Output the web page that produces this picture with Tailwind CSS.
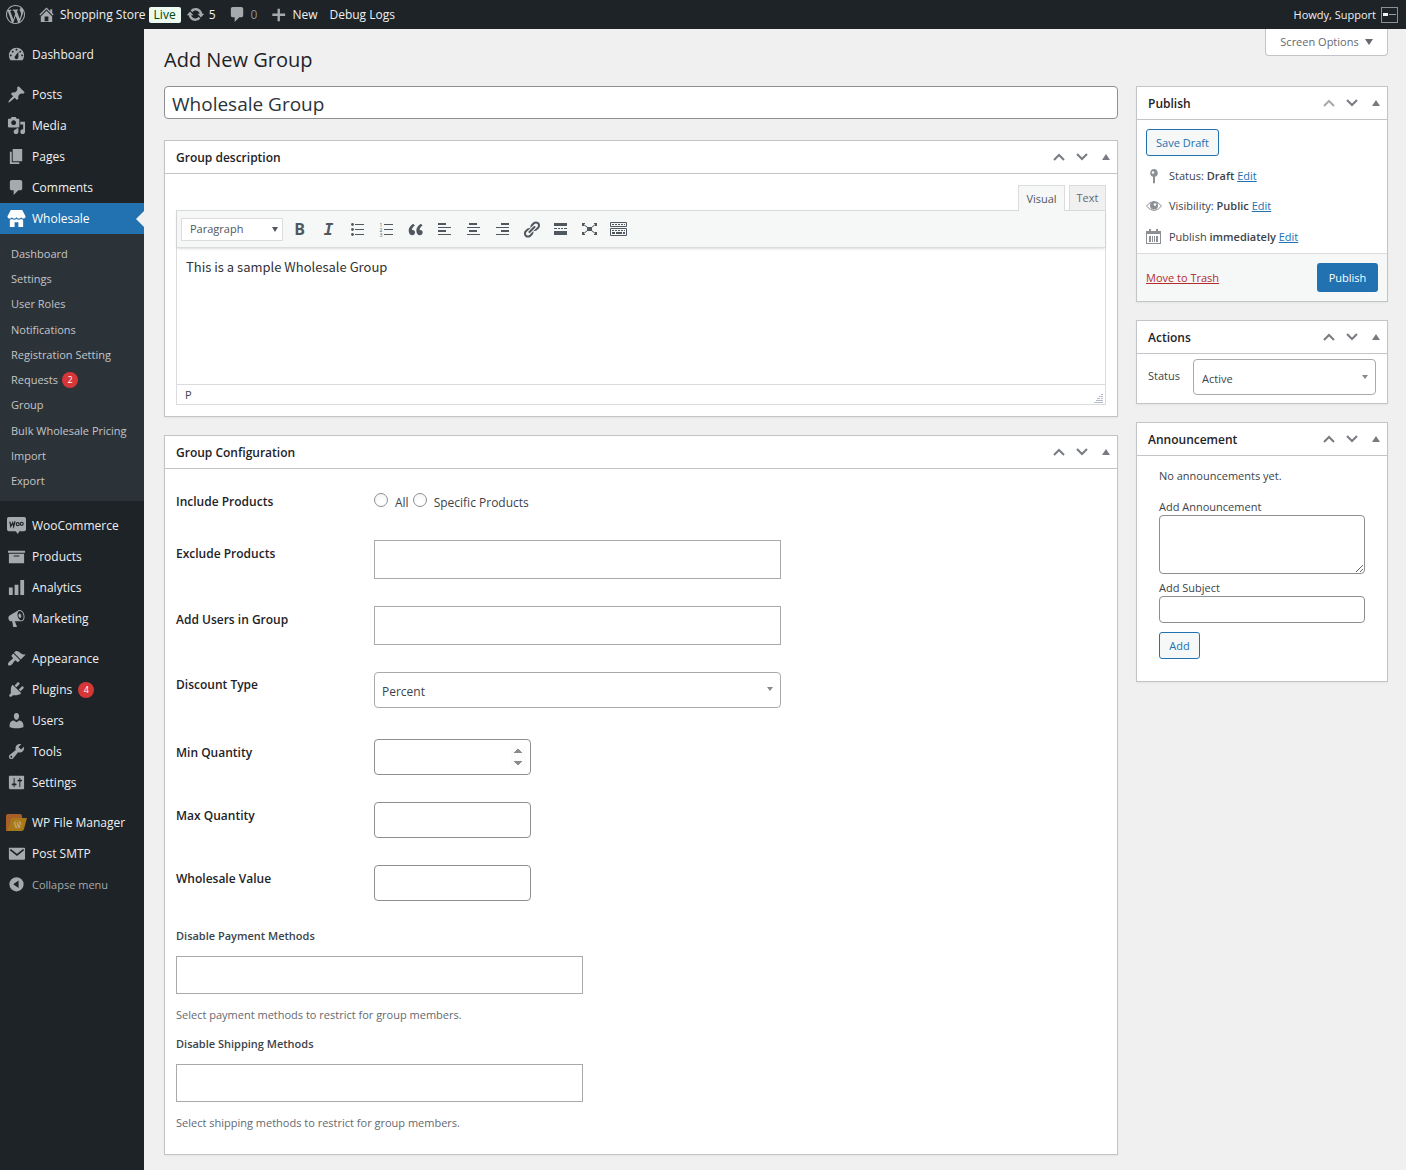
<!DOCTYPE html>
<html lang="en">
<head>
  <meta charset="UTF-8">
  <meta name="viewport" content="width=device-width, initial-scale=1.0">
  <title>Add New Group - Shopping Store</title>
  <script src="https://cdn.jsdelivr.net/npm/@tailwindcss/browser@4"></script>
  <style>
    body { font-family: 'Open Sans', 'Noto Sans', sans-serif; }
  </style>
</head>
<body class="bg-[#f0f0f1] text-[#3c434a] text-[11px] leading-[18px] min-h-screen flex flex-col">
  <!-- Shared icons -->
  <svg class="hidden" aria-hidden="true">
    <symbol id="i-up" viewBox="0 0 12 8"><path d="M1 7l5-5 5 5" fill="none" stroke="currentColor" stroke-width="2"/></symbol>
    <symbol id="i-down" viewBox="0 0 12 8"><path d="M1 1l5 5 5-5" fill="none" stroke="currentColor" stroke-width="2"/></symbol>
    <symbol id="i-toggle" viewBox="0 0 8 6"><path d="M4 0l4 6H0z" fill="currentColor"/></symbol>
    <symbol id="i-caret" viewBox="0 0 8 6"><path d="M0 0h8L4 6z" fill="currentColor"/></symbol>
    <symbol id="i-comment" viewBox="0 0 20 20"><path d="M5 2h9c1.1 0 2 .9 2 2v7c0 1.1-.9 2-2 2h-2l-5 5v-5H5c-1.1 0-2-.9-2-2V4c0-1.1.9-2 2-2z"/></symbol>
    <symbol id="i-wp" viewBox="0 0 20 20"><path d="M20 10c0-5.51-4.49-10-10-10C4.48 0 0 4.49 0 10c0 5.52 4.48 10 10 10 5.51 0 10-4.48 10-10zM7.78 15.37L4.37 6.22c.55-.02 1.17-.08 1.17-.08.5-.06.44-1.13-.06-1.11 0 0-1.45.11-2.37.11-.18 0-.37 0-.58-.01C4.12 2.69 6.87 1.11 10 1.11c2.33 0 4.45.87 6.05 2.34-.68-.11-1.65.39-1.65 1.58 0 .74.45 1.36.9 2.1.35.61.55 1.36.55 2.46 0 1.49-1.4 5-1.4 5l-3.03-8.37c.54-.02.82-.17.82-.17.5-.05.44-1.25-.06-1.22 0 0-1.44.12-2.38.12-.87 0-2.33-.12-2.33-.12-.5-.03-.56 1.2-.06 1.22l.92.08 1.26 3.41zM17.41 10c.24-.64.74-1.87.43-4.25.7 1.29 1.05 2.71 1.05 4.25 0 3.29-1.73 6.24-4.4 7.78.97-2.59 1.94-5.2 2.92-7.78zM6.1 18.09C3.12 16.65 1.11 13.53 1.11 10c0-1.3.23-2.48.72-3.59C3.25 10.3 4.67 14.2 6.1 18.09zm4.03-6.63l2.58 6.98c-.86.29-1.76.45-2.71.45-.79 0-1.57-.11-2.29-.33.81-2.38 1.62-4.74 2.42-7.1z"/></symbol>
  </svg>

  <!-- Admin bar -->
  <header class="h-[29px] bg-[#1d2327] text-[#f0f0f1] fill-[#a7aaad] text-[12px] flex items-center pl-[6px] pr-2">
    <a href="#" aria-label="About WordPress"><svg class="size-[19px]"><use href="#i-wp"/></svg></a>
    <a href="#" class="flex items-center ml-3">
      <svg class="size-[19px] mr-1" viewBox="0 0 20 20"><path d="M16 8.5l1.53 1.53-1.06 1.06L10 4.6l-6.47 6.49-1.06-1.06L10 2.5l4 4v-2h2v4zm-6-2.46l6 5.99V18H4v-5.97zM12 17v-5H8v5h4z"/></svg>
      Shopping Store
    </a>
    <span class="ml-[3px] h-4 px-[5px] rounded-[2px] bg-[#edfaef] text-[#00450c] text-[12px] leading-[15px]">Live</span>
    <a href="#" class="flex items-center ml-[5px]">
      <svg class="size-[19px] mr-1" viewBox="0 0 20 20"><path d="M10.2 3.28c3.53 0 6.43 2.61 6.92 6h2.08l-3.5 4-3.5-4h2.32c-.45-1.97-2.21-3.45-4.32-3.45-1.45 0-2.73.71-3.54 1.78L4.95 5.66C6.23 4.2 8.11 3.28 10.2 3.28zm-.4 13.44c-3.52 0-6.43-2.61-6.92-6H.8l3.5-4c1.17 1.33 2.33 2.67 3.5 4H5.48c.45 1.97 2.21 3.45 4.32 3.45 1.45 0 2.73-.71 3.54-1.78l1.71 1.95c-1.28 1.46-3.15 2.38-5.25 2.38z"/></svg>
      5
    </a>
    <a href="#" class="flex items-center ml-3 text-[#8c8f94]"><svg class="size-[19px] mr-1"><use href="#i-comment"/></svg>0</a>
    <a href="#" class="flex items-center ml-3">
      <svg class="size-[19px] mr-1" viewBox="0 0 20 20"><path d="M17 9v2.500h-5.500V17H9v-5.500H3.500V9H9V4h2.500v5z"/></svg>
      New
    </a>
    <a href="#" class="ml-3">Debug Logs</a>
    <a href="#" class="flex items-center ml-auto text-[11px]">
      Howdy, Support
      <span class="ml-[5px] w-[17px] h-4 border border-[#8c8f94] flex items-center gap-px pl-px"><i class="w-[5px] h-[3px] bg-gray-100"></i><i class="w-[7px] h-px bg-gray-400"></i></span>
    </a>
  </header>

  <div class="flex flex-1">
    <!-- Admin menu -->
    <nav class="w-36 shrink-0 bg-[#1d2327] text-[#f0f0f1] fill-[#a7aaad] text-[12px] pt-[10px]">
      <ul>
        <li><a href="#" class="flex items-center h-[31px] pl-[7px] gap-[6px]">
          <svg class="size-[19px]" viewBox="0 0 20 20"><path d="M3.76 17h12.48c1.1-1.37 1.76-3.11 1.76-5 0-4.42-3.58-8-8-8s-8 3.58-8 8c0 1.89.66 3.63 1.76 5zM10 5c.55 0 1 .45 1 1s-.45 1-1 1-1-.45-1-1 .45-1 1-1zM6 7c.55 0 1 .45 1 1s-.45 1-1 1-1-.45-1-1 .45-1 1-1zm8 0c.55 0 1 .45 1 1s-.45 1-1 1-1-.45-1-1 .45-1 1-1zm-5.37 5.55L12 8v6c0 1.1-.9 2-2 2s-2-.9-2-2c0-.57.24-1.08.63-1.45zM4 11c.55 0 1 .45 1 1s-.45 1-1 1-1-.45-1-1 .45-1 1-1zm12 0c.55 0 1 .45 1 1s-.45 1-1 1-1-.45-1-1 .45-1 1-1z" transform="translate(0 -1)"/></svg>
          Dashboard</a></li>
      </ul>
      <ul class="mt-[9px]">
        <li><a href="#" class="flex items-center h-[31px] pl-[7px] gap-[6px]">
          <svg class="size-[19px]" viewBox="0 0 20 20"><path d="M10.44 3.02l1.82-1.82 6.36 6.35-1.83 1.82c-1.05-.68-2.48-.57-3.41.36l-.75.75c-.92.93-1.04 2.35-.35 3.41l-1.83 1.82-2.41-2.41-2.8 2.79c-.42.42-3.38 2.71-3.8 2.29s1.86-3.39 2.28-3.81l2.79-2.79L4.1 9.36l1.83-1.82c1.05.69 2.48.57 3.4-.36l.75-.75c.93-.92 1.05-2.35.36-3.41z"/></svg>
          Posts</a></li>
        <li><a href="#" class="flex items-center h-[31px] pl-[7px] gap-[6px]">
          <svg class="size-[19px]" viewBox="0 0 20 20"><path d="M13 11V4c0-.55-.45-1-1-1h-1.67L9 1H5L3.67 3H2c-.55 0-1 .45-1 1v7c0 .55.45 1 1 1h10c.55 0 1-.45 1-1zM7 4.5c1.38 0 2.5 1.12 2.5 2.5S8.38 9.5 7 9.5 4.5 8.38 4.5 7 5.62 4.5 7 4.5zM14 6h5v10.5c0 1.38-1.12 2.5-2.5 2.5S14 17.88 14 16.5s1.12-2.5 2.5-2.5c.17 0 .34.02.5.05V9h-3V6zm-4 8.05V13h2v3.5c0 1.38-1.12 2.5-2.5 2.5S7 17.88 7 16.5 8.12 14 9.5 14c.17 0 .34.02.5.05z"/></svg>
          Media</a></li>
        <li><a href="#" class="flex items-center h-[31px] pl-[7px] gap-[6px]">
          <svg class="size-[19px]" viewBox="0 0 20 20"><path d="M6 15V2h10v13H6zm-1 1h8v2H3V5h2v11z"/></svg>
          Pages</a></li>
        <li><a href="#" class="flex items-center h-[31px] pl-[7px] gap-[6px]">
          <svg class="size-[19px]"><use href="#i-comment"/></svg>
          Comments</a></li>
        <li>
          <a href="#" class="relative flex items-center h-[31px] pl-[7px] gap-[6px] bg-[#2271b1] text-white fill-white">
            <svg class="size-[19px]" viewBox="0 0 20 20"><path d="M4 1h12l3.500 6.500c0 1.500-1 2.500-2.300 2.500-1 0-1.800-.5-2.300-1.300-.5.800-1.400 1.300-2.400 1.300S10.600 9.500 10 8.700C9.400 9.500 8.500 10 7.500 10s-1.900-.5-2.400-1.300C4.600 9.500 3.800 10 2.800 10 1.500 10 .5 9 .5 7.500zM3 11.200c.8 0 1.500-.2 2.100-.6.700.4 1.500.6 2.400.6s1.800-.3 2.500-.7c.7.4 1.600.7 2.500.7s1.700-.2 2.400-.6c.6.400 1.300.6 2.100.6V19h-5v-5H8v5H3z"/></svg>
            Wholesale
            <span class="absolute right-0 top-2 border-y-8 border-r-8 border-y-transparent border-r-[#f0f0f1]"></span>
          </a>
          <ul class="flex flex-col h-[267px] py-[7px] bg-[#2c3338] text-[#c3c4c7] text-[11px]">
            <li class="flex-1 flex items-center pl-[11px]"><a href="#">Dashboard</a></li>
            <li class="flex-1 flex items-center pl-[11px]"><a href="#">Settings</a></li>
            <li class="flex-1 flex items-center pl-[11px]"><a href="#">User Roles</a></li>
            <li class="flex-1 flex items-center pl-[11px]"><a href="#">Notifications</a></li>
            <li class="flex-1 flex items-center pl-[11px]"><a href="#">Registration Setting</a></li>
            <li class="flex-1 flex items-center pl-[11px]"><a href="#" class="flex items-center gap-1">Requests <span class="size-4 rounded-full bg-[#d63638] text-white text-[9px] leading-4 text-center">2</span></a></li>
            <li class="flex-1 flex items-center pl-[11px]"><a href="#">Group</a></li>
            <li class="flex-1 flex items-center pl-[11px]"><a href="#">Bulk Wholesale Pricing</a></li>
            <li class="flex-1 flex items-center pl-[11px]"><a href="#">Import</a></li>
            <li class="flex-1 flex items-center pl-[11px]"><a href="#">Export</a></li>
          </ul>
        </li>
      </ul>
      <ul class="mt-[9px]">
        <li><a href="#" class="flex items-center h-[31px] pl-[7px] gap-[6px]">
          <svg class="size-[19px]" viewBox="0 0 20 20"><path d="M2 1h16a2 2 0 0 1 2 2v11a2 2 0 0 1-2 2h-5l-1.500 3L9 16H2a2 2 0 0 1-2-2V3a2 2 0 0 1 2-2z"/><path d="M3 6l1 5 2-4 1 4 1.500-5.500" fill="none" stroke="#1d2327" stroke-width="1.300"/><circle cx="11.300" cy="8.600" r="1.600" fill="none" stroke="#1d2327" stroke-width="1.200"/><circle cx="15.500" cy="8.200" r="1.600" fill="none" stroke="#1d2327" stroke-width="1.200"/></svg>
          WooCommerce</a></li>
        <li><a href="#" class="flex items-center h-[31px] pl-[7px] gap-[6px]">
          <svg class="size-[19px]" viewBox="0 0 20 20"><path d="M19 4v2H1V4h18zM2 7h16v10H2V7zm11 3V9H7v1h6z"/></svg>
          Products</a></li>
        <li><a href="#" class="flex items-center h-[31px] pl-[7px] gap-[6px]">
          <svg class="size-[19px]" viewBox="0 0 20 20"><path d="M18 18V2h-4v16h4zm-6 0V7H8v11h4zm-6 0v-8H2v8h4z"/></svg>
          Analytics</a></li>
        <li><a href="#" class="flex items-center h-[31px] pl-[7px] gap-[6px]">
          <svg class="size-[19px]" viewBox="0 0 20 20"><path d="M18.150 5.940c.46 1.620.38 3.220-.02 4.480-.42 1.280-1.260 2.180-2.300 2.480-.16.06-.26.06-.4.06-.06.02-.12.02-.18.02-.06.02-.14.02-.22.02h-6.800l2.220 5.500c.02.14-.06.26-.14.34-.08.1-.24.16-.34.16H6.950c-.1 0-.26-.06-.34-.16-.08-.08-.16-.2-.14-.34l-1-5.500H4.250l-.02-.02c-.5.06-1.080-.18-1.540-.62s-.88-1.080-1.060-1.880c-.24-.8-.2-1.560-.02-2.200.18-.62.58-1.080 1.060-1.300l.02-.02 9-5.400c.1-.06.18-.1.24-.16.06-.04.14-.08.24-.12.16-.08.28-.12.5-.18 1.040-.3 2.240.1 3.220.98s1.840 2.240 2.260 3.860zm-2.580 5.980h-.02c.4-.1.74-.34 1.040-.7.58-.7.86-1.760.86-3.040 0-.64-.1-1.300-.28-1.980-.34-1.360-1.020-2.500-1.780-3.240s-1.680-1.100-2.460-.88c-.82.22-1.400.96-1.700 2-.32 1.040-.28 2.360.06 3.720.38 1.360 1 2.500 1.800 3.240.78.74 1.620 1.100 2.480.88zm-2.540-7.080c.22-.04.42-.02.62.04.38.16.76.48 1.020 1s.42 1.200.42 1.780c0 .3-.04.56-.12.8-.18.48-.44.84-.86.94-.34.1-.8-.06-1.140-.4s-.64-.86-.78-1.500c-.18-.62-.12-1.240.02-1.720s.48-.84.82-.94z"/></svg>
          Marketing</a></li>
      </ul>
      <ul class="mt-[9px]">
        <li><a href="#" class="flex items-center h-[31px] pl-[7px] gap-[6px]">
          <svg class="size-[19px]" viewBox="0 0 20 20"><path d="M14.480 11.060L7.410 3.990l1.500-1.500c.5-.56 2.300-.47 3.510.32 1.210.8 1.430 1.280 2.910 2.100 1.180.64 2.450 1.260 4.450.85zm-.71.71L6.700 4.700 4.930 6.470c-.39.39-.39 1.020 0 1.410l1.060 1.060c.39.39.39 1.030 0 1.420-.6.6-1.430 1.110-2.210 1.690-.35.26-.7.53-1.010.84C1.430 14.230.4 16.080 1.400 17.070c.99 1 2.840-.03 4.180-1.360.31-.31.58-.66.85-1.020.57-.78 1.080-1.610 1.690-2.210.39-.39 1.020-.39 1.410 0l1.060 1.060c.39.39 1.020.39 1.410 0z"/></svg>
          Appearance</a></li>
        <li><a href="#" class="flex items-center h-[31px] pl-[7px] gap-[6px]">
          <svg class="size-[19px]" viewBox="0 0 20 20"><path d="M13.110 4.360L9.870 7.600 8 5.730l3.240-3.240c.35-.34 1.050-.2 1.560.32.52.51.66 1.210.31 1.550zm-8 1.770l.91-1.120 9.010 9.010-1.190.84c-.71.71-2.630 1.160-3.820 1.160H6.140L4.900 17.260c-.59.59-1.540.59-2.120 0-.59-.58-.59-1.530 0-2.120l1.240-1.240v-3.880c0-1.130.4-3.190 1.090-3.890zm7.260 3.970l3.240-3.240c.34-.35 1.040-.21 1.550.31.52.51.66 1.210.31 1.550l-3.240 3.250z"/></svg>
          Plugins <span class="size-4 rounded-full bg-[#d63638] text-white text-[9px] leading-4 text-center">4</span></a></li>
        <li><a href="#" class="flex items-center h-[31px] pl-[7px] gap-[6px]">
          <svg class="size-[19px]" viewBox="0 0 20 20"><path d="M10 9.250c-2.270 0-2.730-3.440-2.730-3.440C7 4.020 7.820 2 9.970 2c2.160 0 2.980 2.020 2.710 3.810 0 0-.41 3.440-2.680 3.440zm0 2.570L12.720 10c2.390 0 4.520 2.330 4.520 4.530v2.490s-3.650 1.130-7.240 1.130c-3.650 0-7.240-1.130-7.240-1.130v-2.490c0-2.250 1.940-4.480 4.470-4.480z"/></svg>
          Users</a></li>
        <li><a href="#" class="flex items-center h-[31px] pl-[7px] gap-[6px]">
          <svg class="size-[19px]" viewBox="0 0 20 20"><path d="M16.680 9.770c-1.340 1.340-3.300 1.670-4.950.99l-5.410 6.520c-.99.99-2.590.99-3.580 0s-.99-2.590 0-3.570l6.520-5.420c-.68-1.650-.35-3.610.99-4.950 1.280-1.280 3.120-1.620 4.720-1.060l-2.890 2.890 2.820 2.820 2.860-2.870c.53 1.580.18 3.390-1.080 4.650zM3.810 16.210c.4.39 1.040.39 1.430 0 .4-.4.4-1.040 0-1.430-.39-.4-1.030-.4-1.430 0-.39.39-.39 1.030 0 1.430z"/></svg>
          Tools</a></li>
        <li><a href="#" class="flex items-center h-[31px] pl-[7px] gap-[6px]">
          <svg class="size-[19px]" viewBox="0 0 20 20"><path d="M18 16V4c0-.55-.45-1-1-1H3c-.55 0-1 .45-1 1v12c0 .55.45 1 1 1h14c.55 0 1-.45 1-1zM8 11h1c.55 0 1 .45 1 1s-.45 1-1 1H8v1.500c0 .28-.22.5-.5.5s-.5-.22-.5-.5V13H6c-.55 0-1-.45-1-1s.45-1 1-1h1V5.500c0-.28.22-.5.5-.5s.5.22.5.5V11zm5-2h-1c-.55 0-1-.45-1-1s.45-1 1-1h1V5.500c0-.28.22-.5.5-.5s.5.22.5.5V7h1c.55 0 1 .45 1 1s-.45 1-1 1h-1v5.500c0 .28-.22.5-.5.5s-.5-.22-.5-.5V9z"/></svg>
          Settings</a></li>
      </ul>
      <ul class="mt-[9px]">
        <li><a href="#" class="flex items-center h-[31px] pl-[6px] gap-[5px]">
          <svg class="w-[21px] h-[17px]" viewBox="0 0 21 17"><path d="M0 2a2 2 0 0 1 2-2h12a2 2 0 0 1 2 2v10L2 17H0z" fill="#a65e2a"/><path d="M5.500 4H21l-3 11q-.5 2-2.500 2H1.500z" fill="#a87818"/><g transform="translate(7.500 6.500) scale(.4)" fill="#c9b184"><use href="#i-wp" width="20" height="20"/></g></svg>
          WP File Manager</a></li>
        <li><a href="#" class="flex items-center h-[31px] pl-[7px] gap-[6px]">
          <svg class="size-[19px]" viewBox="0 0 20 20"><path d="M2 4h16a1 1 0 0 1 1 1v10.500a1 1 0 0 1-1 1H3a1 1 0 0 1-1-1z"/><path d="M3.500 6l7 5.500 7-5.500" fill="none" stroke="#1d2327" stroke-width="1.800"/></svg>
          Post SMTP</a></li>
        <li><button type="button" class="flex items-center h-[31px] pl-[7px] gap-[6px] text-[#a7aaad] text-[11px]">
          <svg class="size-[19px]" viewBox="0 0 20 20"><path d="M10 2.300a7.500 7.500 0 1 1 0 15 7.500 7.500 0 0 1 0-15zm2.200 3.500L6.500 9.800l5.700 4z"/></svg>
          Collapse menu</button></li>
      </ul>
    </nav>

    <!-- Page content -->
    <div class="flex-1 flex flex-col pl-5 pr-[18px] pb-4">
      <div class="flex justify-between h-[57px]">
        <h1 class="text-[20px] leading-[30px] text-[#1d2327] pt-4">Add New Group</h1>
        <button type="button" class="h-[27px] w-[123px] flex items-center justify-center gap-[6px] bg-white border border-t-0 border-[#c3c4c7] rounded-b text-[#646970]">Screen Options <svg class="w-2 h-[6px]"><use href="#i-caret"/></svg></button>
      </div>

      <form class="flex items-start gap-[18px]" onsubmit="return false">
        <main class="flex-1 min-w-0">
          <input type="text" aria-label="Group title" value="Wholesale Group" class="block w-full h-[33px] px-[7px] pt-[2px] mb-[21px] bg-white border border-[#8c8f94] rounded text-[19px] text-[#2c3338]">

          <section class="bg-white border border-[#c3c4c7] shadow-xs mb-[18px]">
            <div class="flex items-center h-[33px] border-b border-[#c3c4c7] pl-[11px] pr-[7px] text-[#787c82]">
              <h2 class="mr-auto pt-[2px] text-[12px] font-semibold text-[#1d2327]">Group description</h2>
              <button type="button" aria-label="Move up" class="mr-[11px]"><svg class="w-3 h-2"><use href="#i-up"/></svg></button>
              <button type="button" aria-label="Move down" class="mr-[14px]"><svg class="w-3 h-2"><use href="#i-down"/></svg></button>
              <button type="button" aria-label="Toggle panel"><svg class="w-2 h-[6px]"><use href="#i-toggle"/></svg></button>
            </div>
            <div class="px-[11px] pt-[11px] pb-[11px]">
              <div class="flex justify-end gap-1 text-[#50575e]">
                <button type="button" class="relative h-[26px] -mb-px w-[47px] bg-[#f6f7f7] border border-b-0 border-[#dcdcde]">Visual</button>
                <button type="button" class="h-[25px] w-[37px] bg-[#f0f0f1] border border-b-0 border-[#dcdcde] text-[#646970]">Text</button>
              </div>
              <div class="border border-[#dcdcde]">
                <div class="flex items-center h-[37px] bg-[#f6f7f7] border-b border-[#dcdcde] shadow-sm pl-1 text-[#50575e] fill-[#50575e]">
                  <div class="relative w-[102px] mr-[7px]">
                    <select aria-label="Block format" class="appearance-none w-full h-[23px] pl-2 bg-white border border-[#dcdcde] text-[11px]"><option>Paragraph</option><option>Heading 1</option></select>
                    <svg class="absolute right-[5px] top-[9px] w-[6px] h-[5px] pointer-events-none" viewBox="0 0 8 6" preserveAspectRatio="none"><path d="M0 0h8L4 6z"/></svg>
                  </div>
                  <div class="flex gap-[10px]">
                    <button type="button" aria-label="Bold" class="size-[19px] font-bold text-[16px] leading-[19px]">B</button>
                    <button type="button" aria-label="Italic" class="size-[19px] font-bold italic font-['DejaVu_Sans_Mono',monospace] text-[16px] leading-[19px]">I</button>
                    <button type="button" aria-label="Bulleted list"><svg class="size-[19px]" viewBox="0 0 19 19"><path d="M7 4h9v1H7zM7 9h9v1H7zM7 14h9v1H7z"/><circle cx="4.500" cy="4.500" r="1.400"/><circle cx="4.500" cy="9.500" r="1.400"/><circle cx="4.500" cy="14.500" r="1.400"/></svg></button>
                    <button type="button" aria-label="Numbered list"><svg class="size-[19px]" viewBox="0 0 19 19"><path d="M7 4h9v1H7zM7 9h9v1H7zM7 14h9v1H7z"/><text x="2.500" y="6.500" font-size="5">1</text><text x="2.500" y="11.500" font-size="5">2</text><text x="2.500" y="16.500" font-size="5">3</text></svg></button>
                    <button type="button" aria-label="Blockquote"><svg class="size-[19px]" viewBox="0 0 20 20"><path d="M9.490 13.220c0-.74-.2-1.380-.61-1.900-.62-.78-1.830-.88-2.530-.72-.29-1.650 1.110-3.750 2.920-4.650L7.880 4c-2.730 1.300-5.420 4.280-4.960 8.050C3.210 14.430 4.590 16 6.540 16c.85 0 1.560-.25 2.120-.75s.83-1.180.83-2.030zm8.050 0c0-.74-.2-1.380-.61-1.900-.63-.78-1.830-.88-2.530-.72-.29-1.650 1.110-3.750 2.920-4.650L15.930 4c-2.730 1.300-5.410 4.280-4.950 8.050.29 2.380 1.660 3.950 3.610 3.950.85 0 1.560-.25 2.120-.75s.83-1.180.83-2.030z"/></svg></button>
                    <button type="button" aria-label="Align left"><svg class="size-[19px]" viewBox="0 0 19 19"><path d="M3 3h8v2H3zM3 7h13v1H3zM3 10h8v2H3zM3 14h13v1H3z"/></svg></button>
                    <button type="button" aria-label="Align center"><svg class="size-[19px]" viewBox="0 0 19 19"><path d="M5 3h8v2H5zM3 7h13v1H3zM5 10h8v2H5zM3 14h13v1H3z"/></svg></button>
                    <button type="button" aria-label="Align right"><svg class="size-[19px]" viewBox="0 0 19 19"><path d="M8 3h8v2H8zM3 7h13v1H3zM8 10h8v2H8zM3 14h13v1H3z"/></svg></button>
                    <button type="button" aria-label="Insert link"><svg class="size-[19px]" viewBox="0 0 20 20"><path d="M17.740 2.760c1.680 1.690 1.680 4.410 0 6.100l-1.530 1.520c-1.120 1.120-2.700 1.470-4.140 1.090l2.620-2.610.76-.77.76-.76c.84-.84.84-2.200 0-3.040-.84-.85-2.200-.85-3.040 0l-.77.76-3.380 3.380c-.37-1.440-.02-3.020 1.100-4.140l1.520-1.530c1.690-1.680 4.420-1.680 6.100 0zM8.590 13.430l5.340-5.340c.42-.42.42-1.100 0-1.520-.44-.43-1.130-.39-1.530 0l-5.330 5.340c-.42.42-.42 1.100 0 1.520.44.43 1.130.39 1.520 0zm-.76 2.290l4.140-4.150c.38 1.440.03 3.020-1.090 4.140l-1.520 1.530c-1.690 1.680-4.410 1.680-6.100 0-1.680-1.680-1.680-4.420 0-6.100l1.530-1.520c1.120-1.120 2.700-1.470 4.140-1.100l-4.140 4.150c-.85.84-.85 2.200 0 3.050.84.84 2.200.84 3.040 0z"/></svg></button>
                    <button type="button" aria-label="Read more tag"><svg class="size-[19px]" viewBox="0 0 19 19"><path d="M3 3h13v3H3zM3 11h13v4H3zM3 8h3v1H3zM7 8h2v1H7zM10 8h2v1h-2zM13 8h3v1h-3z"/></svg></button>
                    <button type="button" aria-label="Fullscreen"><svg class="size-[19px]" viewBox="0 0 19 19"><path d="M7 7h5v4H7zM2 3h3v1H4v2H2zM14 3h3v3h-2V4h-1zM2 12h2v2h1v1H2zM15 12h2v3h-3v-1h1z"/><path d="M3 4l13 10M16 4L3 14" stroke="#50575e" fill="none"/></svg></button>
                    <button type="button" aria-label="Toolbar toggle"><svg class="size-[19px]" viewBox="0 0 19 19"><path d="M1.500 2.500h16v4h-16zM1.500 8.500h16v7h-16z" fill="none" stroke="#50575e"/><path d="M3 4.500h13M3 10.500h13" fill="none" stroke="#50575e" stroke-dasharray="2 1"/><path d="M3 12h3v2H3zM7 12h6v2H7zM14 12h2v2h-2z"/></svg></button>
                  </div>
                </div>
                <textarea aria-label="Group description" class="block w-full h-[136px] px-[9px] pt-[9px] resize-none outline-none font-['Noto_Sans_CJK_SC',sans-serif] text-[13px] leading-5 text-[#333]">This is a sample Wholesale Group</textarea>
                <div class="flex items-center justify-between h-5 border-t border-[#dcdcde] pl-2 pr-[2px]">
                  P
                  <svg class="size-[9px] self-end mb-px" viewBox="0 0 9 9"><path d="M7 0h2v1H7zM5 2h4v1H5zM7 4h2v1H7zM3 4h3v1H3zM2 6h7v1H2zM0 8h9v1H0z" fill="#b6bcc6"/></svg>
                </div>
              </div>
            </div>
          </section>

          <section class="bg-white border border-[#c3c4c7] shadow-xs">
            <div class="flex items-center h-[33px] border-b border-[#c3c4c7] pl-[11px] pr-[7px] text-[#787c82]">
              <h2 class="mr-auto pt-[2px] text-[12px] font-semibold text-[#1d2327]">Group Configuration</h2>
              <button type="button" aria-label="Move up" class="mr-[11px]"><svg class="w-3 h-2"><use href="#i-up"/></svg></button>
              <button type="button" aria-label="Move down" class="mr-[14px]"><svg class="w-3 h-2"><use href="#i-down"/></svg></button>
              <button type="button" aria-label="Toggle panel"><svg class="w-2 h-[6px]"><use href="#i-toggle"/></svg></button>
            </div>
            <div class="px-[11px] pt-5 pb-[22px]">
              <div class="flex flex-col gap-[27px] text-[12px] text-[#3c434a]">
                <div class="grid grid-cols-[198px_1fr] items-start h-6">
                  <span class="pt-1 font-semibold text-[#1d2327]">Include Products</span>
                  <div class="flex pt-1">
                    <input type="radio" id="inc-all" name="include" class="appearance-none size-[14px] rounded-full border border-[#8c8f94] bg-white shadow-inner"><label for="inc-all" class="ml-[7px] mr-1 pt-px">All</label>
                    <input type="radio" id="inc-spec" name="include" class="appearance-none size-[14px] rounded-full border border-[#8c8f94] bg-white shadow-inner"><label for="inc-spec" class="ml-[7px] pt-px">Specific Products</label>
                  </div>
                </div>
                <div class="grid grid-cols-[198px_1fr] items-start">
                  <label for="exclude" class="pt-[5px] font-semibold text-[#1d2327]">Exclude Products</label>
                  <input type="text" id="exclude" class="w-[407px] h-[39px] px-2 border border-[#aaa] bg-white">
                </div>
                <div class="grid grid-cols-[198px_1fr] items-start">
                  <label for="users" class="pt-[5px] font-semibold text-[#1d2327]">Add Users in Group</label>
                  <input type="text" id="users" class="w-[407px] h-[39px] px-2 border border-[#aaa] bg-white">
                </div>
                <div class="grid grid-cols-[198px_1fr] items-start pb-1">
                  <label for="discount" class="pt-1 font-semibold text-[#1d2327]">Discount Type</label>
                  <div class="relative w-[407px]">
                    <select id="discount" class="appearance-none w-full h-9 pl-[7px] pt-1 border border-[#aaa] rounded bg-white text-[12px]"><option>Percent</option><option>Fixed</option></select>
                    <svg class="absolute right-2 top-[15px] w-[6px] h-1 text-[#888] pointer-events-none" viewBox="0 0 6 4"><path d="M0 0h6L3 4z" fill="currentColor"/></svg>
                  </div>
                </div>
                <div class="grid grid-cols-[198px_1fr] items-start">
                  <label for="min" class="pt-[5px] font-semibold text-[#1d2327]">Min Quantity</label>
                  <input type="number" id="min" class="w-[157px] h-9 pl-2 pr-1 border border-[#8c8f94] rounded bg-white text-[13px] [&::-webkit-inner-spin-button]:opacity-100 [&::-webkit-inner-spin-button]:h-6">
                </div>
                <div class="grid grid-cols-[198px_1fr] items-start">
                  <label for="max" class="pt-[5px] font-semibold text-[#1d2327]">Max Quantity</label>
                  <input type="number" id="max" class="w-[157px] h-9 pl-2 pr-1 border border-[#8c8f94] rounded bg-white text-[13px]">
                </div>
                <div class="grid grid-cols-[198px_1fr] items-start">
                  <label for="value" class="pt-[5px] font-semibold text-[#1d2327]">Wholesale Value</label>
                  <input type="number" id="value" class="w-[157px] h-9 pl-2 pr-1 border border-[#8c8f94] rounded bg-white text-[13px]">
                </div>
              </div>
              <div class="mt-[26px] flex flex-col items-start">
                <label for="payment" class="font-semibold mb-[11px]">Disable Payment Methods</label>
                <input type="text" id="payment" class="w-[407px] h-[38px] px-2 border border-[#aaa] bg-white">
                <p class="mt-3 text-[#646970]">Select payment methods to restrict for group members.</p>
                <label for="shipping" class="font-semibold mt-[11px] mb-[11px]">Disable Shipping Methods</label>
                <input type="text" id="shipping" class="w-[407px] h-[38px] px-2 border border-[#aaa] bg-white">
                <p class="mt-3 text-[#646970]">Select shipping methods to restrict for group members.</p>
              </div>
            </div>
          </section>
        </main>

        <aside class="w-[252px] shrink-0 flex flex-col gap-[18px]">
          <section class="bg-white border border-[#c3c4c7] shadow-xs">
            <div class="flex items-center h-[33px] border-b border-[#c3c4c7] pl-[11px] pr-[7px] text-[#787c82]">
              <h2 class="mr-auto pt-[2px] text-[12px] font-semibold text-[#1d2327]">Publish</h2>
              <button type="button" aria-label="Move up" class="mr-[11px] text-[#a7aaad]"><svg class="w-3 h-2"><use href="#i-up"/></svg></button>
              <button type="button" aria-label="Move down" class="mr-[14px]"><svg class="w-3 h-2"><use href="#i-down"/></svg></button>
              <button type="button" aria-label="Toggle panel"><svg class="w-2 h-[6px]"><use href="#i-toggle"/></svg></button>
            </div>
            <div class="px-[9px] pt-[9px] fill-[#8c8f94]">
              <button type="button" class="block h-[27px] w-[73px] border border-[#2271b1] rounded-[3px] bg-[#f6f7f7] text-[#2271b1]">Save Draft</button>
              <div class="flex items-center h-[31px] mt-1">
                <svg class="w-4 h-4 mr-[7px]" viewBox="0 0 16 16"><path d="M8 1a4 4 0 0 1 1 7.800V15l-1 .5-1-.5V8.800A4 4 0 0 1 8 1z"/><circle cx="7" cy="4.500" r="1.200" fill="#fff"/></svg>
                <span>Status: <b class="font-semibold">Draft</b> <a href="#" class="text-[#2271b1] underline">Edit</a></span>
              </div>
              <div class="flex items-center h-[30px]">
                <svg class="w-4 h-4 mr-[7px]" viewBox="0 0 16 16"><path d="M.5 8Q4 3.500 8 3.500T15.500 8Q12 12.500 8 12.500T.5 8z" fill="none" stroke="#8c8f94"/><circle cx="8" cy="7.500" r="4"/><circle cx="9" cy="6.500" r="1.300" fill="#fff"/></svg>
                <span>Visibility: <b class="font-semibold">Public</b> <a href="#" class="text-[#2271b1] underline">Edit</a></span>
              </div>
              <div class="flex items-center h-8">
                <svg class="w-4 h-4 mr-[7px]" viewBox="0 0 16 16"><path d="M0 2h3V0h2v2h5V0h2v2h3v3H0zM0 5h1v10H0zM14 5h1v10h-1zM1 14h13v1H1zM3 7h2v6H3zM6 7h1v6H6zM8 7h1v6H8zM10 7h2v6h-2z"/></svg>
                <span>Publish <b class="font-semibold">immediately</b> <a href="#" class="text-[#2271b1] underline">Edit</a></span>
              </div>
            </div>
            <div class="flex items-center justify-between h-12 px-[9px] bg-[#f6f7f7] border-t border-[#dcdcde]">
              <a href="#" class="text-[#b32d2e] underline">Move to Trash</a>
              <button type="submit" class="h-[29px] w-[61px] rounded-[3px] bg-[#2271b1] text-white">Publish</button>
            </div>
          </section>

          <section class="bg-white border border-[#c3c4c7] shadow-xs">
            <div class="flex items-center h-[33px] border-b border-[#c3c4c7] pl-[11px] pr-[7px] text-[#787c82]">
              <h2 class="mr-auto pt-[2px] text-[12px] font-semibold text-[#1d2327]">Actions</h2>
              <button type="button" aria-label="Move up" class="mr-[11px]"><svg class="w-3 h-2"><use href="#i-up"/></svg></button>
              <button type="button" aria-label="Move down" class="mr-[14px]"><svg class="w-3 h-2"><use href="#i-down"/></svg></button>
              <button type="button" aria-label="Toggle panel"><svg class="w-2 h-[6px]"><use href="#i-toggle"/></svg></button>
            </div>
            <div class="flex justify-between items-start pl-[11px] pr-[11px] pt-[5px] pb-2">
              <label for="status" class="pt-2">Status</label>
              <div class="relative w-[183px]">
                <select id="status" class="appearance-none w-full h-9 pl-2 pt-1 border border-[#aaa] rounded bg-white text-[11px]"><option>Active</option><option>Inactive</option></select>
                <svg class="absolute right-2 top-4 w-[6px] h-1 text-[#888] pointer-events-none" viewBox="0 0 6 4"><path d="M0 0h6L3 4z" fill="currentColor"/></svg>
              </div>
            </div>
          </section>

          <section class="bg-white border border-[#c3c4c7] shadow-xs">
            <div class="flex items-center h-[33px] border-b border-[#c3c4c7] pl-[11px] pr-[7px] text-[#787c82]">
              <h2 class="mr-auto pt-[2px] text-[12px] font-semibold text-[#1d2327]">Announcement</h2>
              <button type="button" aria-label="Move up" class="mr-[11px]"><svg class="w-3 h-2"><use href="#i-up"/></svg></button>
              <button type="button" aria-label="Move down" class="mr-[14px]"><svg class="w-3 h-2"><use href="#i-down"/></svg></button>
              <button type="button" aria-label="Toggle panel"><svg class="w-2 h-[6px]"><use href="#i-toggle"/></svg></button>
            </div>
            <div class="flex flex-col items-stretch px-[22px] pt-[11px] pb-[22px]">
              <p class="mb-[13px]">No announcements yet.</p>
              <label for="announcement" class="leading-[17px]">Add Announcement</label>
              <textarea id="announcement" class="h-[59px] px-2 border border-[#8c8f94] rounded bg-white"></textarea>
              <label for="subject" class="mt-[6px] leading-4">Add Subject</label>
              <input type="text" id="subject" class="h-[27px] px-2 border border-[#8c8f94] rounded bg-white">
              <button type="button" class="mt-[9px] h-[27px] w-[41px] border border-[#2271b1] rounded-[3px] bg-[#f6f7f7] text-[#2271b1]">Add</button>
            </div>
          </section>
        </aside>
      </form>
    </div>
  </div>
</body>
</html>
